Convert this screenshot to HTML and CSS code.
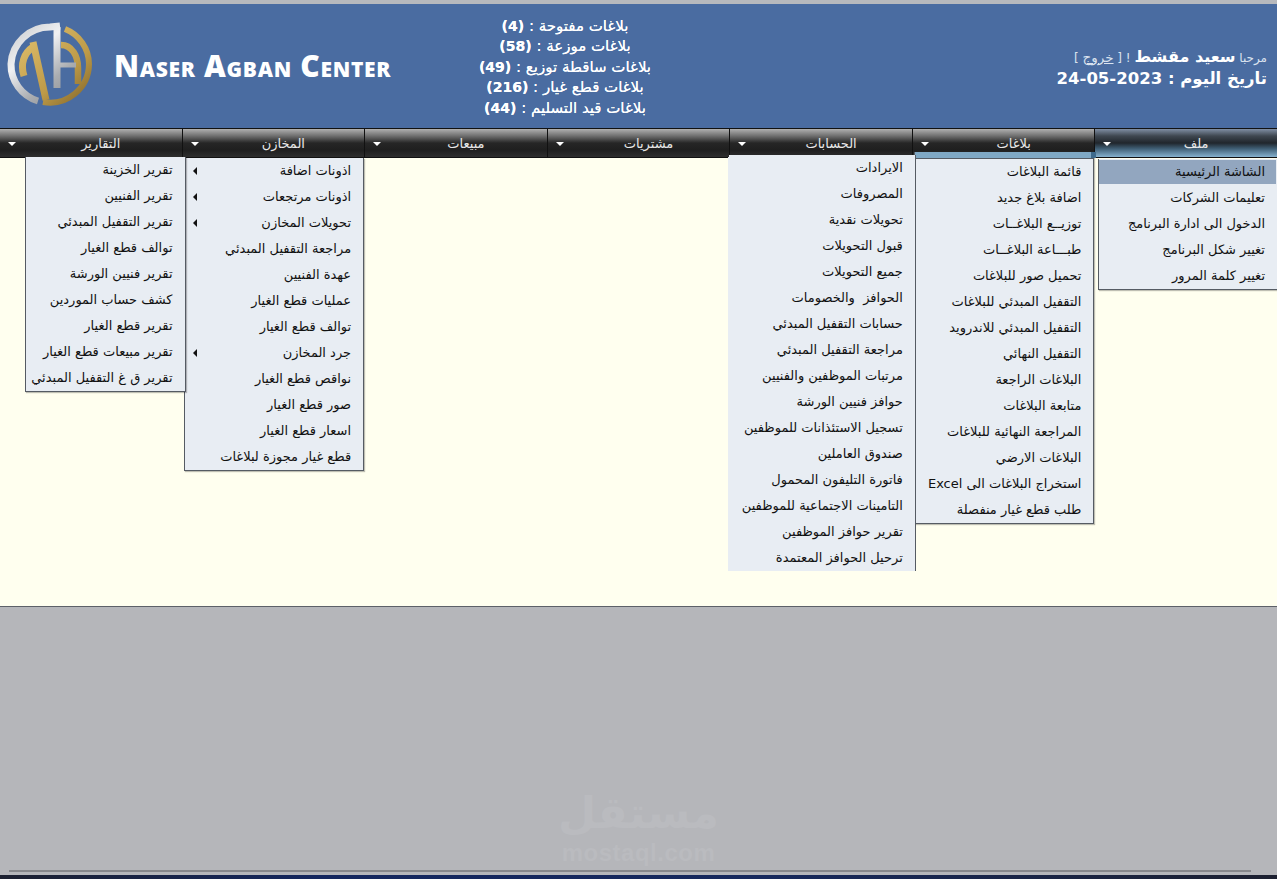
FILE: index.html
```html
<!DOCTYPE html>
<html lang="ar">
<head>
  <meta charset="UTF-8">
  <meta name="viewport" content="width=device-width, initial-scale=1.0">
  <title>Naser Agban Center</title>
  <link rel="stylesheet" href="styles.css">
</head>
<body>
  <div class="topStrip"></div>

  <header class="header">
    <div class="brand">
      <svg class="logo" width="100" height="92" viewBox="0 0 100 92">
        <defs>
          <linearGradient id="silver" gradientUnits="userSpaceOnUse" x1="10" y1="10" x2="70" y2="85">
            <stop offset="0" stop-color="#c9cbce"/>
            <stop offset="0.35" stop-color="#f0f1f3"/>
            <stop offset="0.7" stop-color="#a9acb0"/>
            <stop offset="1" stop-color="#8d9094"/>
          </linearGradient>
          <linearGradient id="gold" gradientUnits="userSpaceOnUse" x1="25" y1="20" x2="85" y2="85">
            <stop offset="0" stop-color="#dcbb68"/>
            <stop offset="0.6" stop-color="#bd9a48"/>
            <stop offset="1" stop-color="#86692b"/>
          </linearGradient>
        </defs>
        <path d="M38 83 A38 38 0 0 1 11 46 A39 39 0 0 1 50 9 L60 8" fill="none" stroke="url(#silver)" stroke-width="7"/>
        <path d="M65 11 A38 38 0 0 1 89 46 A39 39 0 0 1 43 84" fill="none" stroke="url(#gold)" stroke-width="6"/>
        <path d="M24 58 C20 46 24 35 33 29" fill="none" stroke="url(#gold)" stroke-width="7"/>
        <path d="M33 24 L46 82" fill="none" stroke="url(#gold)" stroke-width="7"/>
        <path d="M57 9 V70" fill="none" stroke="url(#silver)" stroke-width="7"/>
        <path d="M61 27 C72 27 78 38 78 50 V66" fill="none" stroke="url(#gold)" stroke-width="6.5"/>
        <path d="M59 47 H76" fill="none" stroke="url(#silver)" stroke-width="5"/>
      </svg>
      <span class="brandName">Naser Agban Center</span>
    </div>

    <div class="counters" dir="rtl">
      <div>بلاغات مفتوحة : <b>(4)</b></div>
      <div>بلاغات موزعة : <b>(58)</b></div>
      <div>بلاغات ساقطة توزيع : <b>(49)</b></div>
      <div>بلاغات قطع غيار : <b>(216)</b></div>
      <div>بلاغات قيد التسليم : <b>(44)</b></div>
    </div>

    <div class="userInfo" dir="rtl">
      <div class="welcome">مرحبا <b>سعيد مقشط</b> ! [ <u>خروج</u> ]</div>
      <div class="today">تاريخ اليوم : 2023-05-24</div>
    </div>
  </header>

  <nav class="nav" dir="rtl">
    <div class="navItem active">
      <span>ملف</span><i class="caret"></i>
      <ul class="menu menuFile">
        <li class="current">الشاشة الرئيسية</li>
        <li>تعليمات الشركات</li>
        <li>الدخول الى ادارة البرنامج</li>
        <li>تغيير شكل البرنامج</li>
        <li>تغيير كلمة المرور</li>
      </ul>
    </div>
    <div class="navItem">
      <span>بلاغات</span><i class="caret"></i>
      <ul class="menu menuReports">
        <li>قائمة البلاغات</li>
        <li>اضافة بلاغ جديد</li>
        <li>توزيــع البلاغــات</li>
        <li>طبـــاعة البلاغــات</li>
        <li>تحميل صور للبلاغات</li>
        <li>التقفيل المبدئي للبلاغات</li>
        <li>التقفيل المبدئي للاندرويد</li>
        <li>التقفيل النهائي</li>
        <li>البلاغات الراجعة</li>
        <li>متابعة البلاغات</li>
        <li>المراجعة النهائية للبلاغات</li>
        <li>البلاغات الارضي</li>
        <li>استخراج البلاغات الى Excel</li>
        <li>طلب قطع غيار منفصلة</li>
      </ul>
    </div>
    <div class="navItem">
      <span>الحسابات</span><i class="caret"></i>
      <ul class="menu menuAccounts">
        <li>الايرادات</li>
        <li>المصروفات</li>
        <li>تحويلات نقدية</li>
        <li>قبول التحويلات</li>
        <li>جميع التحويلات</li>
        <li>الحوافز  والخصومات</li>
        <li>حسابات التقفيل المبدئي</li>
        <li>مراجعة التقفيل المبدئي</li>
        <li>مرتبات الموظفين والفنيين</li>
        <li>حوافز فنيين الورشة</li>
        <li>تسجيل الاستئذانات للموظفين</li>
        <li>صندوق العاملين</li>
        <li>فاتورة التليفون المحمول</li>
        <li>التامينات الاجتماعية للموظفين</li>
        <li>تقرير حوافز الموظفين</li>
        <li>ترحيل الحوافز المعتمدة</li>
      </ul>
    </div>
    <div class="navItem"><span>مشتريات</span><i class="caret"></i></div>
    <div class="navItem"><span>مبيعات</span><i class="caret"></i></div>
    <div class="navItem">
      <span>المخازن</span><i class="caret"></i>
      <ul class="menu menuStores">
        <li class="hasSub">اذونات اضافة</li>
        <li class="hasSub">اذونات مرتجعات</li>
        <li class="hasSub">تحويلات المخازن</li>
        <li>مراجعة التقفيل المبدئي</li>
        <li>عهدة الفنيين</li>
        <li>عمليات قطع الغيار</li>
        <li>توالف قطع الغيار</li>
        <li class="hasSub">جرد المخازن</li>
        <li>نواقص قطع الغيار</li>
        <li>صور قطع الغيار</li>
        <li>اسعار قطع الغيار</li>
        <li>قطع غيار مجوزة لبلاغات</li>
      </ul>
    </div>
    <div class="navItem">
      <span>التقارير</span><i class="caret"></i>
      <ul class="menu menuPrint">
        <li>تقرير الخزينة</li>
        <li>تقرير الفنيين</li>
        <li>تقرير التقفيل المبدئي</li>
        <li>توالف قطع الغيار</li>
        <li>تقرير فنيين الورشة</li>
        <li>كشف حساب الموردين</li>
        <li>تقرير قطع الغيار</li>
        <li>تقرير مبيعات قطع الغيار</li>
        <li>تقرير ق غ التقفيل المبدئي</li>
      </ul>
    </div>
  </nav>

  <main class="content"></main>

  <footer class="bottomArea">
    <div class="watermark">
      <div class="wmArabic" dir="rtl">مستقل</div>
      <div class="wmLatin">mostaql.com</div>
    </div>
    <div class="scrollLine"></div>
    <div class="taskbar"></div>
  </footer>
</body>
</html>
```

FILE: styles.css
```css
* {
  box-sizing: border-box;
}
html, body {
  height: 100%;
}
body {
  margin: 0;
  height: 879px;
  overflow: hidden;
  display: flex;
  flex-direction: column;
  font-family: "DejaVu Sans", "Noto Sans", sans-serif;
  background-color: #b5b6ba;
}
.topStrip {
  height: 4px;
  background-color: #b7b9bd;
}

/* header */
.header {
  height: 124px;
  display: grid;
  grid-template-columns: 425px 280px 1fr;
  align-items: center;
  background-color: #4a6ca1;
  color: #fff;
}
.brand {
  display: flex;
  align-items: center;
  height: 100%;
}
.logo {
  flex: none;
  align-self: flex-start;
  margin-top: 14px;
}
.brandName {
  margin-left: 14px;
  margin-top: -2px;
  font-family: "Open Sans", sans-serif;
  font-size: 30px;
  font-weight: 800;
  font-variant: small-caps;
  letter-spacing: 0.7px;
  white-space: nowrap;
}
.counters {
  margin-top: 2px;
  text-align: center;
  font-size: 15px;
  line-height: 20.5px;
  color: #fff;
  text-shadow: 0 0 0.6px #fff;
}
.counters b {
  font-size: 14px;
}
.userInfo {
  text-align: right;
  padding-right: 10px;
  margin-top: 4px;
}
.welcome {
  font-size: 12px;
  line-height: 20px;
  color: #dbe3ef;
}
.welcome b {
  font-size: 16px;
  color: #fff;
}
.welcome u {
  font-size: 13.5px;
}
.today {
  font-size: 16.5px;
  line-height: 22px;
  font-weight: 700;
}

/* nav */
.nav {
  display: flex;
  height: 30px;
  position: relative;
  z-index: 2;
  border-top: 1px solid #111;
  border-bottom: 1px solid #111;
}
.navItem {
  flex: 1;
  position: relative;
  display: flex;
  align-items: center;
  justify-content: center;
  padding-left: 20px;
  font-size: 13px;
  color: #e8e8e8;
  border-left: 1px solid #111;
  background: linear-gradient(#b0b0b0 0, #6e6e6e 25%, #262626 50%, #1f1f1f 75%, #2e2e2e 100%);
}
.navItem:last-child {
  border-left: 0;
}
.navItem.active {
  background: linear-gradient(#7f8ea3 0, #3f4750 25%, #20262c 50%, #3f5e74 70%, #86b2cf 100%);
}
.caret {
  position: absolute;
  left: 8px;
  top: 13px;
  border-style: solid;
  border-width: 4px 4.5px 0;
  border-color: #fff transparent transparent;
}

/* dropdown lists */
.menu {
  position: absolute;
  margin: 0;
  padding: 0;
  list-style: none;
  background-color: #e8edf3;
  color: #111;
  font-size: 13px;
  border: 1px solid #555b63;
  border-top: 0;
  box-shadow: 1px 1px 1px rgba(0, 0, 0, 0.25);
}
.menu li {
  height: 26px;
  line-height: 26px;
  padding-right: 12px;
  white-space: pre;
  position: relative;
}
.menu li.current {
  height: 24px;
  line-height: 24px;
  margin: 1px 1px 1px 0;
  padding-right: 11px;
  background-color: #92a6bf;
}
.menu li.hasSub::after {
  content: "";
  position: absolute;
  left: 8px;
  top: 9px;
  border-style: solid;
  border-width: 4px 4px 4px 0;
  border-color: transparent #111 transparent transparent;
}
.menuFile {
  top: 30px;
  right: 0;
  width: 179px;
  border-right: 0;
}
.menuReports {
  top: 23px;
  right: 0;
  width: 180px;
  padding-top: 7px;
}
.menuReports::before {
  content: "";
  position: absolute;
  top: 0;
  left: 0;
  right: 0;
  height: 6px;
  background-color: #7fa8c4;
  border-bottom: 1px solid #555b63;
}
.menuReports::after {
  content: "";
  position: absolute;
  top: 0;
  right: -3px;
  width: 5px;
  height: 6px;
  background-color: #3d6a8c;
}
.menuAccounts {
  top: 26px;
  right: -4px;
  width: 188px;
  border-left: 0;
  border-bottom: 0;
  box-shadow: none;
}
.menuStores {
  top: 29px;
  right: 0;
  width: 180px;
}
.menuPrint {
  top: 28px;
  right: -4px;
  width: 161px;
}

/* rest of the page */
.content {
  height: 449px;
  background-color: #ffffef;
  border-bottom: 1px solid #5c6068;
}
.bottomArea {
  flex: 1;
  position: relative;
  background-color: #b5b6ba;
}
.watermark {
  position: absolute;
  left: 0;
  right: 0;
  bottom: 14px;
  text-align: center;
  color: #babbbf;
}
.wmArabic {
  font-size: 44px;
  font-weight: 700;
  line-height: 44px;
}
.wmLatin {
  margin-top: 6px;
  font-size: 24px;
  line-height: 24px;
  letter-spacing: 0.5px;
  font-family: "Liberation Sans", sans-serif;
  font-weight: 700;
}
.scrollLine {
  position: absolute;
  left: 9px;
  right: 26px;
  bottom: 7px;
  height: 2px;
  background-color: #86878b;
}
.taskbar {
  position: absolute;
  left: 0;
  right: 0;
  bottom: 0;
  height: 4px;
  background: linear-gradient(90deg, #1c2030 0, #13265e 25%, #16285c 60%, #1c2030 100%);
}
```
